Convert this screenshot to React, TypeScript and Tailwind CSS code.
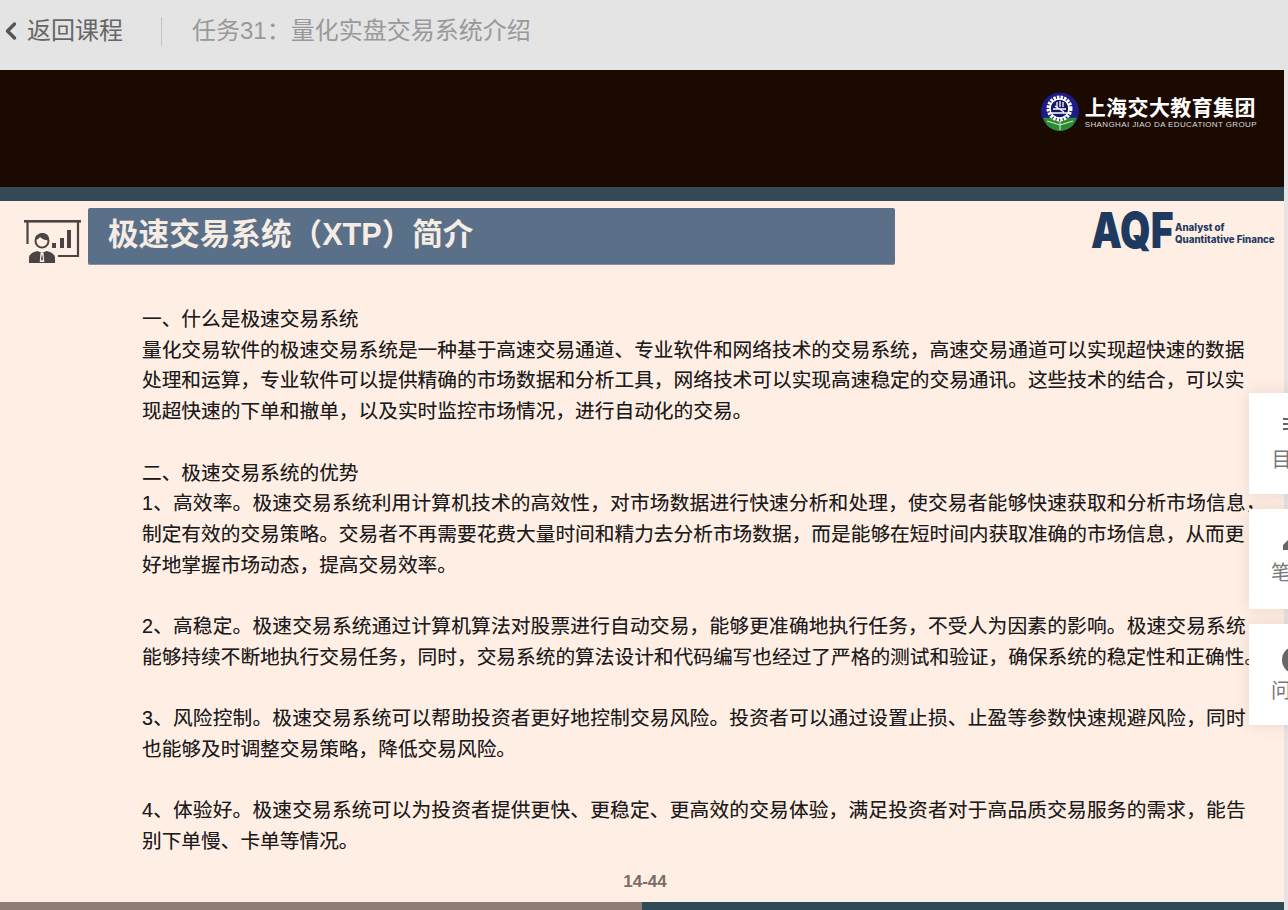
import React from 'react';
import { ChevronLeft } from 'lucide-react';

const cjk = "font-['Liberation_Sans','Noto_Sans_CJK_SC',sans-serif]";

const paragraphs: string[][] = [
  [
    '一、什么是极速交易系统',
    '量化交易软件的极速交易系统是一种基于高速交易通道、专业软件和网络技术的交易系统，高速交易通道可以实现超快速的数据',
    '处理和运算，专业软件可以提供精确的市场数据和分析工具，网络技术可以实现高速稳定的交易通讯。这些技术的结合，可以实',
    '现超快速的下单和撤单，以及实时监控市场情况，进行自动化的交易。',
  ],
  [
    '二、极速交易系统的优势',
    '1、高效率。极速交易系统利用计算机技术的高效性，对市场数据进行快速分析和处理，使交易者能够快速获取和分析市场信息，',
    '制定有效的交易策略。交易者不再需要花费大量时间和精力去分析市场数据，而是能够在短时间内获取准确的市场信息，从而更',
    '好地掌握市场动态，提高交易效率。',
  ],
  [
    '2、高稳定。极速交易系统通过计算机算法对股票进行自动交易，能够更准确地执行任务，不受人为因素的影响。极速交易系统',
    '能够持续不断地执行交易任务，同时，交易系统的算法设计和代码编写也经过了严格的测试和验证，确保系统的稳定性和正确性。',
  ],
  [
    '3、风险控制。极速交易系统可以帮助投资者更好地控制交易风险。投资者可以通过设置止损、止盈等参数快速规避风险，同时',
    '也能够及时调整交易策略，降低交易风险。',
  ],
  [
    '4、体验好。极速交易系统可以为投资者提供更快、更稳定、更高效的交易体验，满足投资者对于高品质交易服务的需求，能告',
    '别下单慢、卡单等情况。',
  ],
];

const PresenterIcon = () => (
  <svg width="57" height="43" viewBox="0 0 57 43" fill="none">
    <rect x="0" y="0" width="57" height="2.6" fill="#4a4444" />
    <path d="M3.500 2v22M54 2v34H34" stroke="#4a4444" strokeWidth="2.200" />
    <rect x="28" y="23" width="4" height="5" fill="#4a4444" />
    <rect x="36" y="18" width="4" height="10" fill="#4a4444" />
    <rect x="43" y="10" width="4" height="18" fill="#4a4444" />
    <circle cx="18" cy="21" r="6.500" fill="#ffeee5" stroke="#4a4444" strokeWidth="2" />
    <path d="M11 20c0-5 4-7 7.500-7s7 2.500 6.500 7c-3 .5-7-.5-9-3-1 1.500-2.500 3-5 3z" fill="#4a4444" />
    <path d="M5 43v-5c0-4 4-6 8.500-7l4.500 2 4.500-2c4.500 1 8.500 3 8.500 7v5z" fill="#4a4444" />
    <path d="M16.500 33h3l.8 9h-4.600z" fill="#ffeee5" />
    <path d="M18 34l1 5-1 2-1-2z" fill="#4a4444" />
  </svg>
);

const GroupLogo = () => (
  <svg width="38" height="39" viewBox="0 0 38 39">
    <circle cx="19" cy="19.500" r="19" fill="#1c1c86" />
    <path d="M2 26c6-1 12 0 17 3 5-3 11-4 17-3-3 8-9 13-17 13S5 34 2 26z" fill="#2f8a34" />
    <path d="M6 29l13 4 13-4M19 29v9" stroke="#d8efd0" strokeWidth="1" fill="none" />
    <circle cx="18.500" cy="16.500" r="11" fill="none" stroke="#fff" strokeWidth="4" strokeDasharray="2.400 1.100" />
    <circle cx="18.500" cy="16.500" r="9.500" fill="none" stroke="#fff" strokeWidth="1.500" />
    <circle cx="18.500" cy="16.500" r="8.500" fill="#17176a" />
    <path d="M12 17h13M14 14l9 6M16 10v5M19 9v6M22 10v5M11 21h15" stroke="#fff" strokeWidth="1.300" />
  </svg>
);

const HamburgerIcon = () => (
  <svg width="28" height="28" viewBox="0 0 28 28" fill="#666">
    <rect x="1" y="8" width="20" height="2" />
    <rect x="1" y="13" width="20" height="2" />
    <rect x="1" y="18" width="20" height="2" />
  </svg>
);

const PencilIcon = () => (
  <svg width="28" height="28" viewBox="0 0 28 28" fill="#666">
    <path d="M1 26v-5L13 9l5 5L6 26z" />
  </svg>
);

const QuestionIcon = () => (
  <svg width="28" height="28" viewBox="0 0 28 28">
    <circle cx="14" cy="14" r="14" fill="#666" />
  </svg>
);

const SideTab = ({ icon, label, top, gap, height }: { icon: React.ReactNode; label: string; top: string; gap: string; height: string }) => (
  <div className={`w-[80px] bg-white flex flex-col shadow-[0_0_14px_rgba(120,80,50,0.14)] ${height} ${top}`}>
    <div className="pl-[33px] h-[28px]">{icon}</div>
    <div className={`text-center text-[20px] leading-[26px] text-[#777] ${gap}`}>{label}</div>
  </div>
);

const App: React.FC = () => {
  return (
    <div className={`relative h-[910px] w-[1288px] overflow-hidden bg-[#e4e4e4] ${cjk}`}>
      <div className="h-[70px] flex items-center pb-[8px]">
        <ChevronLeft className="-ml-[3px] text-[#555]" size={28} strokeWidth={3} />
        <span className="ml-[2px] text-[24px] text-[#666]">返回课程</span>
        <div className="ml-[38px] h-[29px] w-px bg-[#c4c4c4]" />
        <span className="ml-[30px] text-[24px] text-[#999]">任务31：量化实盘交易系统介绍</span>
      </div>

      <div className="w-[1284px]">
        <div className="h-[117px] bg-[#1a0a02] flex justify-end pt-[22px] pr-[27px]">
          <div className="flex gap-[6px] items-start">
            <GroupLogo />
            <div className="text-white pt-[3px]">
              <div className="text-[21px] leading-[25px] font-bold tracking-[0.4px] whitespace-nowrap">上海交大教育集团</div>
              <div className="text-[8px] leading-[9px] tracking-[0.38px] text-[#ddd] whitespace-nowrap">SHANGHAI JIAO DA EDUCATIONT GROUP</div>
            </div>
          </div>
        </div>
        <div className="h-[14px] bg-[#314a56]" />

        <div className="h-[701px] bg-[#feeee4] flex flex-col">
          <div className="flex items-start pl-[24px] pt-[7px]">
            <div className="w-[64px] pt-[12px]">
              <PresenterIcon />
            </div>
            <div className="w-[807px] h-[57px] bg-[#5a7089] rounded-[2px] border-b border-[#8a8f98] pl-[20px] pb-[3px] flex items-center text-[30.6px] font-bold text-[#f6ece4] whitespace-nowrap">
              极速交易系统（XTP）简介
            </div>
            <div className="ml-[196px] w-[189px] flex items-center text-[#1f3a60]">
              <span className="w-[84px] font-['Inter',sans-serif] text-[50px] leading-[52px] font-black origin-left scale-x-[0.78] -translate-y-[4px] whitespace-nowrap">AQF</span>
              <div className="font-['Inter',sans-serif] text-[9.7px] leading-[12px] font-extrabold whitespace-nowrap">
                <div>Analyst of</div>
                <div>Quantitative Finance</div>
              </div>
            </div>
          </div>

          <div className="pl-[142px] pt-[39px] text-[19.7px] leading-[30.7px] text-[#1c1a1a] [text-shadow:0_0_0.5px_rgba(28,26,26,0.45)] flex flex-col gap-[30.7px]">
            {paragraphs.map((lines) => (
              <div key={lines[0]}>
                {lines.map((line) => (
                  <div key={line} className={/^\d、/.test(line) ? 'whitespace-nowrap tracking-[0.18px]' : 'whitespace-nowrap'}>{line}</div>
                ))}
              </div>
            ))}
          </div>

          <div className="mt-auto pb-[11px] pl-[6px] text-center text-[17px] leading-[18px] font-bold text-[#7d6c64]">14-44</div>
        </div>

        <div className="h-[8px] flex">
          <div className="w-[642px] bg-[#8f7d75]" />
          <div className="flex-1 bg-[#2f4a56]" />
        </div>
      </div>

      <div className="absolute left-[1249px] top-[393px] flex flex-col gap-[15px]">
        <SideTab label="目录" height="h-[101px]" top="pt-[17px]" gap="mt-[9px] pl-[5px]" icon={<HamburgerIcon />} />
        <SideTab label="笔记" height="h-[100px]" top="pt-[15px]" gap="mt-[8px] pl-[4px]" icon={<PencilIcon />} />
        <SideTab label="问答" height="h-[101px]" top="pt-[22px]" gap="mt-[4px] pl-[4px]" icon={<QuestionIcon />} />
      </div>
    </div>
  );
};

export default App;
